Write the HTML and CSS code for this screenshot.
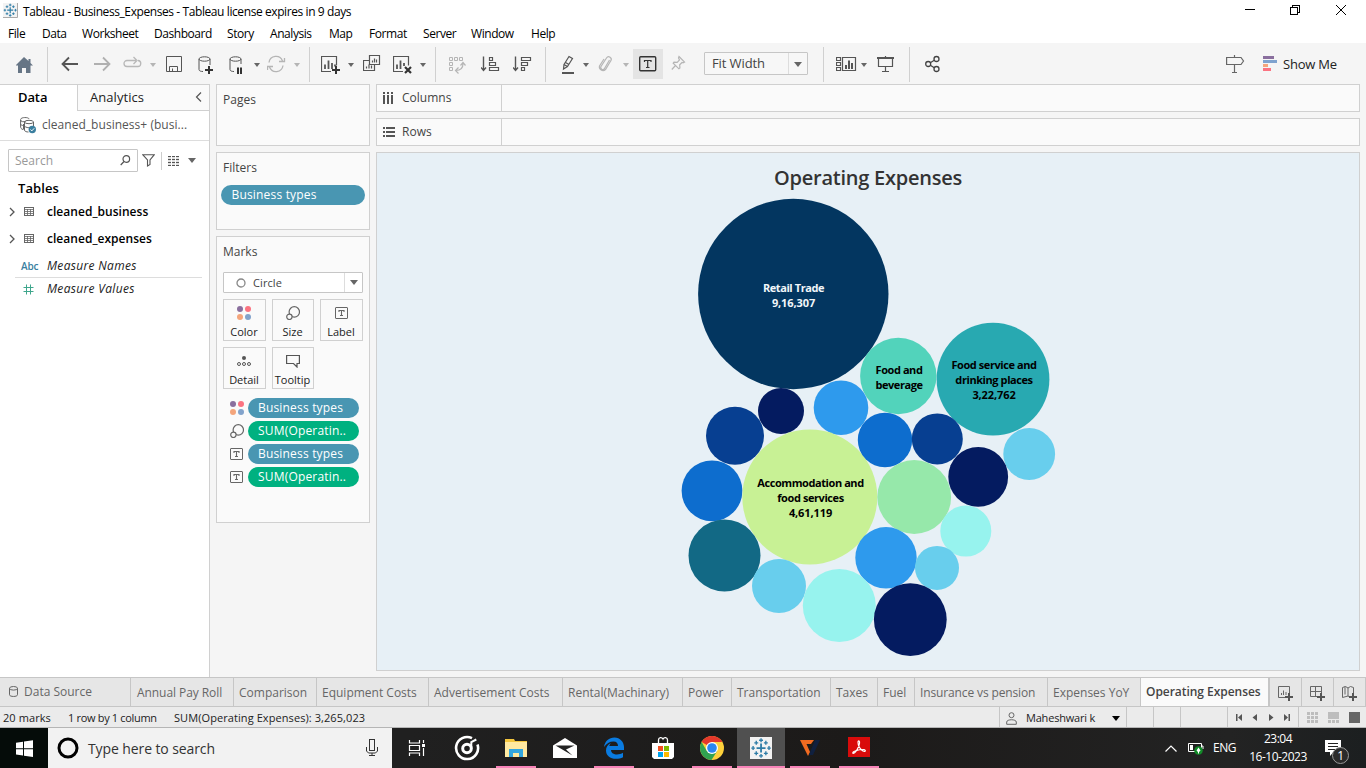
FILE: index.html
```html
<!DOCTYPE html>
<html lang="en">
<head>
<meta charset="utf-8">
<title>Tableau - Business_Expenses</title>
<link rel="stylesheet" href="styles.css">
</head>
<body>
<svg width="0" height="0" class="defs">
  <defs>
    <g id="logo" stroke="#2e7ca6" fill="none"><path d="M6.5 3.5v6M3.5 6.5h6" stroke-width="1.2"/><path d="M6.5 0v2.6M5.2 1.3h2.6M6.5 10.4V13M5.2 11.7h2.6M0 6.5h2.4M1.2 5.2v2.6M10.6 6.5H13M11.8 5.2v2.6M2 3h2.6M3.3 1.7v2.6M8.4 3H11M9.7 1.7v2.6M2 10h2.6M3.3 8.7v2.6M8.4 10H11M9.7 8.7v2.6" stroke-width=".9"/></g>
    <g id="dots"><circle cx="3" cy="3" r="3" fill="#8a6f9e"/><circle cx="11" cy="3" r="3" fill="#fb7381"/><circle cx="3" cy="11" r="3" fill="#f4a57c"/><circle cx="11" cy="11" r="3" fill="#82a3cb"/></g>
    <g id="size" fill="none" stroke="#666" stroke-width="1.2"><circle cx="8.3" cy="5.9" r="5.2"/><circle cx="3.4" cy="10.8" r="2.7" fill="#fafafa"/></g>
    <g id="label"><rect x=".5" y=".5" width="12" height="11" rx=".5" fill="none" stroke="#666"/><path d="M4 5V3.5h5V5M6.500 3.500v5M5 8.500h3" fill="none" stroke="#666" stroke-width="1.1"/></g>
    <g id="table" fill="none" stroke="#666"><rect x=".5" y=".5" width="9" height="8"/><path d="M0 2.500h10M0 4.500h10M0 6.500h10M3.500 2v7M6.500 2v7" stroke-width=".8"/></g>
    <path id="chev" d="M1 1l4 4-4 4" fill="none" stroke="#555" stroke-width="1.3"/>
  </defs>
</svg>
<div class="app">
  <header class="titlebar">
    <svg class="app-logo" width="15" height="15"><rect width="15" height="15" fill="#f3f3f3"/><path d="M14.500 0v14.500H0" fill="none" stroke="#aaa"/><use href="#logo" x=".7" y=".7"/></svg>
    <span class="title">Tableau - Business_Expenses - Tableau license expires in 9 days</span>
    <svg class="winctl" width="104" height="16" fill="none" stroke="#000" shape-rendering="crispEdges"><path d="M0 7.500h10"/><path d="M45.500 5.500h7v7h-7zM47.500 5V3.500h7v7H53"/><path d="M91 3l10 10M101 3l-10 10" shape-rendering="auto"/></svg>
  </header>
  <nav class="menubar">
    <span>File</span><span>Data</span><span>Worksheet</span><span>Dashboard</span><span>Story</span><span>Analysis</span><span>Map</span><span>Format</span><span>Server</span><span>Window</span><span>Help</span>
  </nav>
  <div class="toolbar">
    <svg width="20" height="24"><path d="M8 5L-.5 13.500H2V21h4v-5h4v5h4.500v-7.500H17L14.500 11V7h-2v2z" fill="#667585"/></svg>
    <i class="sep"></i>
    <svg width="20" height="24"><path d="M1.500 12H17M8 5.500L1.500 12 8 18.500" fill="none" stroke="#555" stroke-width="1.8"/></svg>
    <svg width="20" height="24"><path d="M0 12h15.500M9 5.500l6.500 6.500L9 18.500" fill="none" stroke="#b0b0b0" stroke-width="1.8"/></svg>
    <svg width="20" height="24"><path d="M9 8.500H4a3 3 0 0 0 0 6h10.500a3 3 0 0 0 .5-6M8 8.500h5M10.500 5l3.500 3.500-3.500 3.500" fill="none" stroke="#b8b8b8" stroke-width="1.3"/></svg>
    <i class="caret dim"></i>
    <svg width="20" height="24" fill="none" stroke="#555"><path d="M.5 4.500h15v15H.5zM3.500 19.400V14.500H11.500v4.900"/><path d="M6.500 19v-2.500"/></svg>
    <svg width="20" height="24" fill="none" stroke="#555"><ellipse cx="6.500" cy="7" rx="5.500" ry="2.200"/><path d="M1 7v10.500c0 1.500 2 2 4 2M12 7v6"/><path d="M7 18h8M11 14v8" stroke="#333" stroke-width="2"/></svg>
    <svg width="20" height="24" fill="none" stroke="#555"><ellipse cx="6.500" cy="7" rx="5.500" ry="2.200"/><path d="M1 7v10.500c0 1.500 2 2 4 2M12 7v5"/><path d="M9 15.500v6.500M12 15.500v6.500" stroke="#333" stroke-width="2"/></svg>
    <i class="caret"></i>
    <svg width="20" height="24" fill="none" stroke="#b5b5b5" stroke-width="1.300"><path d="M2 10.500a7 7 0 0 1 13.500-1.500M16 13.500a7 7 0 0 1-13.500 1.500"/><path d="M12 9.500h5.500V6M6 14.500H.5V18"/></svg>
    <i class="caret dim"></i>
    <i class="sep"></i>
    <svg width="20" height="24" fill="none" stroke="#555"><path d="M10 19.500H.5v-15h15v9" stroke-width="1.200"/><path d="M4 17v-4.500M7.500 17V8.500M11 17v-6M14 14.500v-2" stroke-width="1.800"/><path d="M11 18h8M15 14v8" stroke="#333" stroke-width="2"/></svg>
    <i class="caret"></i>
    <svg width="20" height="24" fill="none" stroke="#555"><path d="M6.500 3.500h10v9h-10zM6 8.500H.5v10h11V13" stroke-width="1.200"/><path d="M9.500 10.500v-2M11.500 10.500v-4M13.500 10.500v-3M3.500 16.500v-2M6 16.500v-4M8.500 16.500v-3" stroke-width="1.200"/></svg>
    <svg width="20" height="24" fill="none" stroke="#555"><path d="M10 19.500H.5v-15h15v9" stroke-width="1.200"/><path d="M4 17v-4.500M7.500 17V8.500M11 14v-3" stroke-width="1.800"/><path d="M12 15l6 6M18 15l-6 6" stroke="#333" stroke-width="2.200"/></svg>
    <i class="caret"></i>
    <i class="sep"></i>
    <svg width="20" height="24" fill="none" stroke="#b5b5b5"><path d="M1.500 5.500h3v3h-3zM6.500 5.500h3v3h-3zM11.500 5.500h3v3h-3zM1.500 10.500h3v3h-3zM1.500 15.500h3v3h-3z"/><path d="M8 18.500c4 0 7-2 7-7M12.500 13.500l2.500-3 2.500 3M10.500 15.500l-3 3 3 3" stroke-width="1.200"/></svg>
    <svg width="20" height="24" fill="none" stroke="#555"><path d="M2.500 4.500V18M0 15.500l2.500 3 2.500-3" stroke-width="1.400"/><path d="M8.500 5.500h3v3h-3zM8.500 10.500h6v3h-6zM8.500 15.500h9v3h-9z" stroke-width="1.200"/></svg>
    <svg width="20" height="24" fill="none" stroke="#555"><path d="M2.500 4.500V18M0 15.500l2.500 3 2.500-3" stroke-width="1.400"/><path d="M8.500 5.500h9v3h-9zM8.500 10.500h6v3h-6zM8.500 15.500h3v3h-3z" stroke-width="1.200"/></svg>
    <i class="sep"></i>
    <svg width="20" height="24" fill="none" stroke="#555"><path d="M3 12.500l5-8 3.500 2-5 8zM3 12.500L2.500 17l4-2.500M4.500 10.500l3.500 2" stroke-width="1.200"/><path d="M1 21h12" stroke-width="2"/></svg>
    <i class="caret"></i>
    <svg width="20" height="24" fill="none" stroke="#b5b5b5" stroke-width="1.200"><path d="M11.500 8l-5 8.500a2 2 0 0 1-3.500-2L8.500 6a2.500 2.500 0 0 1 4.300 2.800L7.500 17.500A3.600 3.600 0 0 1 1.500 14L6 7"/></svg>
    <i class="caret dim"></i>
    <span class="tbtn"><svg width="30" height="30" fill="none" stroke="#333"><rect x="6.700" y="7.700" width="16" height="14" rx="1" stroke-width="1.400"/><path d="M11.500 13v-1.500h6.500V13M14.700 11.500v7M13 18.500h3.500" stroke-width="1.200"/></svg></span>
    <svg width="20" height="24" fill="none" stroke="#b5b5b5" stroke-width="1.200"><path d="M8 4.500l5.500 5.500-1.500.8-1-.3-2.300 2.300.2 3.200-1 .8-5.700-5.700.8-1 3.200.2L8.500 8 7.500 6zM4.500 13.500L.8 17.500"/></svg>
    <div class="fit"><span>Fit Width</span><i class="arrow"></i></div>
    <i class="sep"></i>
    <svg width="22" height="24" fill="none" stroke="#555"><path d="M.5 5.500h4v3h-4zM.5 10.500h4v3h-4zM.5 15.500h4v3h-4zM6.500 5.500h13v13h-13z" stroke-width="1.200"/><path d="M10 17v-4M13 17V8.500M16 17v-6" stroke-width="2"/></svg>
    <i class="caret"></i>
    <svg width="20" height="24" fill="none" stroke="#555" stroke-width="1.200"><path d="M0 6h17" stroke-width="2"/><path d="M1.500 6.500v8h14v-8M8.500 4v2M8.500 14.500V19M5 19.500h7"/></svg>
    <i class="sep"></i>
    <svg width="20" height="24" fill="none" stroke="#444" stroke-width="1.300"><circle cx="3.200" cy="12" r="2.500"/><circle cx="11.500" cy="7" r="2.500"/><circle cx="11.500" cy="17" r="2.500"/><path d="M5.300 10.700l4-2.400M5.300 13.300l4 2.400"/></svg>
    <svg width="20" height="24" fill="none" stroke="#666" stroke-width="1.200"><path d="M.6 5.500H15l2.500 3.500-2.500 3.500H.6zM8.500 3v2.500M8.500 12.500V20M6 20.500h5"/></svg>
    <svg width="20" height="24" shape-rendering="crispEdges"><path fill="#8a6f9e" d="M0 4h11v3H0z"/><path fill="#7fa3cf" d="M0 8h14v3H0z"/><path fill="#f4a57c" d="M0 12h5v3H0z"/><path fill="#fb7381" d="M0 16h8v3H0z"/></svg>
    <span class="showme">Show Me</span>
  </div>

  <main class="workspace">
    <aside class="datapane">
      <div class="side-tabs"><div class="on">Data</div><div class="off"><span>Analytics</span><svg width="7" height="10"><path d="M6 .5L1.500 5 6 9.500" fill="none" stroke="#555" stroke-width="1.200"/></svg></div></div>
      <div class="source"><svg width="17" height="17" fill="none" stroke="#666"><path d="M3 12.500C1 12 .6 11 .6 9V2.500C.6 0 9 0 9 2M.6 3c0 1.800 3 2 5 1.500M3.500 7v5.500M.6 7c0 1 1.500 1.500 3 1.500"/><ellipse cx="9" cy="5" rx="4.500" ry="1.700"/><path d="M4.500 5v8c0 1.500 2 2 4 2M13.500 5v4M4.500 9c1 1.500 4 2 6 1.500"/><circle cx="12.300" cy="12.500" r="3.700" fill="#3b7f9f" stroke="none"/><path d="M10.500 12.500l1.300 1.400 2.400-2.600" stroke="#fff"/></svg><span>cleaned_business+ (busi...</span></div>
      <div class="searchrow">
        <div class="search"><span>Search</span><svg width="11" height="11" fill="none" stroke="#555" stroke-width="1.200"><circle cx="6.300" cy="4" r="3.300"/><path d="M4 6.500L.7 10"/></svg></div>
        <svg class="funnel" width="13" height="13" fill="none" stroke="#555" stroke-width="1.100"><path d="M.7.7h11.600L8 6v4.500L5.500 12V6z"/></svg>
        <i class="vsep"></i>
        <svg class="list" width="12" height="10"><path d="M0 .5h12M0 3.500h12M0 6.500h12M0 9.500h12" stroke="#555" stroke-dasharray="3 1"/><path d="M0 2h12M0 5h12M0 8h12" stroke="#999" stroke-width=".6" stroke-dasharray="3 1"/></svg>
        <i class="arrow"></i>
      </div>
      <h2>Tables</h2>
      <div class="tbl"><svg width="7" height="10"><use href="#chev"/></svg><svg width="10" height="9"><use href="#table"/></svg><b>cleaned_business</b></div>
      <div class="tbl"><svg width="7" height="10"><use href="#chev"/></svg><svg width="10" height="9"><use href="#table"/></svg><b>cleaned_expenses</b></div>
      <div class="field"><span class="abc">Abc</span><em>Measure Names</em></div>
      <div class="field last"><svg width="11" height="11"><path d="M3.500.5v10M7.500.5v10M.5 3.500h10M.5 7.500h10" stroke="#3fa68c" fill="none"/></svg><em>Measure Values</em></div>
    </aside>

    <section class="cards">
      <div class="card pages"><h3>Pages</h3></div>
      <div class="card filters"><h3>Filters</h3><div class="pill blue">Business types</div></div>
      <div class="card marks">
        <h3>Marks</h3>
        <div class="marktype"><svg width="10" height="10"><circle cx="5" cy="5" r="4" fill="none" stroke="#888" stroke-width="1.300"/></svg><span>Circle</span><i class="arrow"></i></div>
        <div class="btns">
          <div><svg width="14" height="14"><use href="#dots"/></svg><span>Color</span></div>
          <div><svg width="14" height="14"><use href="#size"/></svg><span>Size</span></div>
          <div><svg width="13" height="14"><use href="#label" y="1"/></svg><span>Label</span></div>
          <div><svg width="14" height="14" fill="none" stroke="#555"><circle cx="7" cy="4" r="2" fill="#555" stroke="none"/><circle cx="2" cy="10" r="1.500"/><circle cx="7" cy="10" r="1.500"/><circle cx="12" cy="10" r="1.500"/></svg><span>Detail</span></div>
          <div><svg width="14" height="14" fill="none" stroke="#555" stroke-width="1.200"><path d="M.6 1.500h12.800v8H11v3.500L7.500 9.500H.6z"/></svg><span>Tooltip</span></div>
        </div>
        <div class="enc"><svg width="14" height="14"><use href="#dots"/></svg><div class="pill blue">Business types</div></div>
        <div class="enc"><svg width="14" height="14"><use href="#size"/></svg><div class="pill green">SUM(Operatin..</div></div>
        <div class="enc"><svg width="14" height="12"><use href="#label"/></svg><div class="pill blue">Business types</div></div>
        <div class="enc"><svg width="14" height="12"><use href="#label"/></svg><div class="pill green">SUM(Operatin..</div></div>
      </div>
    </section>

    <section class="sheet">
      <div class="shelf"><div><svg width="11" height="12"><path d="M1 0v2M5 0v2M9 0v2M1 3v9M5 3v9M9 3v9" stroke="#555" stroke-width="2"/></svg><span>Columns</span></div></div>
      <div class="shelf"><div><svg width="12" height="10"><path d="M0 1h2M3 1h9M0 5h2M3 5h9M0 9h2M3 9h9" stroke="#555" stroke-width="2"/></svg><span>Rows</span></div></div>
      <div class="viz">
        <h1>Operating Expenses</h1>
        <svg class="bubbles" width="982" height="480" viewBox="377 191 982 480">
          <circle cx="793.300" cy="294" r="95.200" fill="#033660"/>
          <circle cx="898.300" cy="376" r="38.200" fill="#52d3bb"/>
          <circle cx="993" cy="379.200" r="56.400" fill="#28a9b1"/>
          <circle cx="781" cy="411" r="23" fill="#041b60"/>
          <circle cx="841" cy="407.700" r="27.300" fill="#2e9aed"/>
          <circle cx="735" cy="435.800" r="29" fill="#073f91"/>
          <circle cx="712" cy="490.800" r="30.400" fill="#0d6dce"/>
          <circle cx="809.800" cy="497" r="67.500" fill="#c8f195"/>
          <circle cx="885" cy="440" r="27.200" fill="#0d6dce"/>
          <circle cx="937.300" cy="438.900" r="25.500" fill="#073f91"/>
          <circle cx="1029.200" cy="454" r="25.900" fill="#68ceed"/>
          <circle cx="978.200" cy="476.800" r="29.900" fill="#041b60"/>
          <circle cx="914.200" cy="497" r="36.900" fill="#96e8aa"/>
          <circle cx="965.800" cy="531.100" r="25.500" fill="#97f3ee"/>
          <circle cx="886" cy="557.800" r="30.700" fill="#2e9aed"/>
          <circle cx="937" cy="567.900" r="22" fill="#68ceed"/>
          <circle cx="724.500" cy="555.600" r="36" fill="#126985"/>
          <circle cx="779" cy="586" r="27" fill="#68ceed"/>
          <circle cx="839.300" cy="605.500" r="36.500" fill="#97f3ee"/>
          <circle cx="910.300" cy="619.600" r="36.400" fill="#041b60"/>
          <g class="lbl">
            <g fill="#f2f6fa"><text x="793.500" y="292">Retail Trade</text><text x="793.500" y="307" class="num">9,16,307</text></g>
            <text x="899" y="374">Food and</text><text x="899" y="389">beverage</text>
            <text x="994" y="369">Food service and</text><text x="994" y="384">drinking places</text><text x="994" y="399" class="num">3,22,762</text>
            <text x="810.500" y="487">Accommodation and</text><text x="810.500" y="502">food services</text><text x="810.500" y="517" class="num">4,61,119</text>
          </g>
        </svg>
      </div>
    </section>
  </main>

  <nav class="sheettabs">
    <div class="ds"><svg width="9" height="11" fill="none" stroke="#666"><ellipse cx="4.500" cy="2.300" rx="4" ry="1.800"/><path d="M.5 2.300v6.500c0 2.200 8 2.200 8 0V2.300"/></svg>Data Source</div>
    <div>Annual Pay Roll</div><div>Comparison</div><div>Equipment Costs</div><div>Advertisement Costs</div><div>Rental(Machinary)</div><div>Power</div><div>Transportation</div><div>Taxes</div><div>Fuel</div><div>Insurance vs pension</div><div>Expenses YoY</div><div class="active">Operating Expenses</div>
    <div class="new"><svg width="16" height="15" fill="none" stroke="#666"><path d="M7 11.500H.5V.5h11V7"/><path d="M3.500 9V7M5.500 9V4.500M8 9V6"/><path d="M7 11h8M11 7v8" stroke="#555" stroke-width="2"/></svg></div>
    <div class="new"><svg width="16" height="15" fill="none" stroke="#666"><path d="M7 10.500H.5V.5h11V7M5.500.5v10M.5 5.500h11"/><path d="M7 11h8M11 7v8" stroke="#555" stroke-width="2"/></svg></div>
    <div class="new"><svg width="16" height="15" fill="none" stroke="#666"><path d="M7 10.500l-1-.5-5.500 1.500V1.500L3.500.5 6 2l2.500-1.500 3 1V7M6 2v8M3 .5v8"/><path d="M7 11h8M11 7v8" stroke="#555" stroke-width="2"/></svg></div>
  </nav>
  <div class="status">
    <div class="info"><span>20 marks</span><span>1 row by 1 column</span><span>SUM(Operating Expenses): 3,265,023</span></div>
    <div class="user"><svg width="11" height="13" fill="none" stroke="#666"><circle cx="5.500" cy="3.200" r="2.500"/><path d="M.7 12.300V10c0-3 9.600-3 9.600 0v2.300z"/></svg><span>Maheshwari k</span><i class="arrow"></i></div>
    <div></div><div></div><div></div>
    <div class="nav"><svg width="60" height="9" fill="#555"><path d="M1 1h1.500v7H1zM7 1v7L3 4.500zM22 1v7l-4.500-3.500zM34 1v7l4.500-3.500zM49 1v7l4-3.500zM53.500 1H55v7h-1.500z"/></svg></div>
    <div class="views"><svg width="54" height="11"><path fill="#bdbdbd" d="M0 0h3v3H0zM4 0h3v3H4zM8 0h3v3H8zM0 4h3v3H0zM4 4h3v3H4zM8 4h3v3H8zM0 8h3v3H0zM4 8h3v3H4zM8 8h3v3H8zM21 0h11v7H21zM21 8h3v3h-3zM25 8h3v3h-3zM29 8h3v3h-3z"/><path fill="#666" d="M42 0h11v11H42z"/></svg></div>
  </div>

  <footer class="taskbar">
    <div class="start"><svg width="17" height="17" fill="#fff"><path d="M0 2.800l7-1v6.400H0zM8 1.600L17 .3v7.900H8zM0 9.200h7v6.300l-7-1zM8 9.200h9V17l-9-1.300z"/></svg></div>
    <div class="cortana"><svg width="22" height="22"><circle cx="11" cy="11" r="9" fill="none" stroke="#000" stroke-width="3"/></svg><span>Type here to search</span><svg width="12" height="18" fill="none" stroke="#333"><rect x="3.500" y=".5" width="5" height="11"/><path d="M.5 8v4l2 2h7l2-2V8M6 14v3M3 16.500h6"/></svg></div>
    <div class="app-ic"><svg width="24" height="24" fill="none" stroke="#fff" stroke-width="1.200"><path d="M3.500 4v3h10V4M3.500 20v-3h10v3M3.500 9.500h10v5h-10z"/><path d="M17.500 4v3M17.500 12v8"/><path d="M16 8h3v3h-3z" fill="#fff" stroke="none"/></svg></div>
    <div class="app-ic"><svg width="26" height="26" fill="none" stroke="#fff"><path d="M18 3.200A11 11 0 1 0 23.500 9.500" stroke-width="2.600"/><circle cx="13" cy="13.500" r="4.300" stroke-width="3"/><path d="M17.300 13.500V7l5-2.500" stroke-width="2"/></svg></div>
    <div class="app-ic run"><svg width="24" height="24"><path fill="#f4c63e" d="M1 3h9l1 2h12v4H1z"/><path fill="#ffe9a1" d="M1 6h22v15H1z"/><path fill="#32a6df" d="M5 13h14v8h-4v-4H9v4H5z"/></svg></div>
    <div class="app-ic"><svg width="24" height="24"><path fill="#fff" d="M0 9.500L12 2l12 7.500V22H0z"/><path fill="#222" d="M2.500 9.500h19L13 13.500l6.500 6z"/></svg></div>
    <div class="app-ic run"><svg width="24" height="24"><path fill="#0a7be0" d="M2 11C3 5 7 1.500 12.500 1.500 18 1.500 22 6 22 11v3H9c0 3 3 4.500 6 4.500 2 0 4.500-.6 6-1.700v4.400c-2 1.100-4.500 1.600-7 1.600-6 0-10-3.300-10-8.300 0-3.500 2-6 4.800-7.500-.8 1-1.300 2-1.500 3H16c0-2.700-1.500-4.500-4.500-4.500C7.500 5.500 4.500 7.500 2 11z"/></svg></div>
    <div class="app-ic"><svg width="24" height="24"><path d="M7.500 8V4c0-3 3.500-3 4.500-1 1-2 4.500-2 4.500 1v4" fill="none" stroke="#fff" stroke-width="1.300"/><path fill="#fff" d="M1 7h22v14l-2 2H3l-2-2z"/><path fill="#f25022" d="M7 10h5v5H7z"/><path fill="#7fba00" d="M13 10h5v5h-5z"/><path fill="#00a4ef" d="M7 16h5v5H7z"/><path fill="#ffb900" d="M13 16h5v5h-5z"/></svg></div>
    <div class="app-ic run"><svg width="24" height="24"><circle cx="12" cy="12" r="12" fill="#fdd03b"/><path fill="#e5382b" d="M12 12L1.600 6A12 12 0 0 1 22.400 6H12z"/><path fill="#31a350" d="M1.600 6A12 12 0 0 0 11.500 24L17.200 15 12 12 6.800 15z"/><circle cx="12" cy="12" r="6" fill="#fff"/><circle cx="12" cy="12" r="4.800" fill="#2b86f0"/></svg></div>
    <div class="app-ic run current"><svg width="24" height="24"><rect x="1" y="1" width="22" height="22" fill="#f2f2f2"/><use href="#logo" transform="translate(2.300 2.300) scale(1.500)"/></svg></div>
    <div class="app-ic run"><svg width="24" height="24"><path fill="#f26b21" d="M2 4h14l-3 4H8.500l3.500 8-2 4z"/><path fill="#10203f" d="M17 4h5l-7 15h-4z"/></svg></div>
    <div class="app-ic run"><svg width="24" height="24"><rect x="1" y="1" width="22" height="20" fill="#d90b0b"/><path d="M6 17.500c-1.500-2 5-4 11-4 2.500 1 1 2.500-1 1.500-3-2-5-5-5-9 .3-2 2-1 1.500 1.500C12 11 8.500 17.500 6 17.500z" fill="none" stroke="#fff" stroke-width="1.200"/></svg></div>
    <div class="tray">
      <svg width="14" height="9"><path d="M1.500 7.500L7 2l5.500 5.500" fill="none" stroke="#fff" stroke-width="1.200"/></svg>
      <svg width="16" height="13"><path d="M.5 1.500h13v8H.5zM14 4h1v3" fill="none" stroke="#fff"/><path d="M2 3h3v5H2z" fill="#fff"/><circle cx="10.500" cy="8.500" r="4.300" fill="#128a28"/><path d="M10.500 5.500l2 3-1.500 1.500v1.500h-1V10L8.500 8.500z" fill="#fff"/></svg>
      <span>ENG</span>
      <div class="clock"><span>23:04</span><span>16-10-2023</span></div>
      <div class="notif"><svg width="16" height="17"><path fill="#fff" d="M0 0h16v12H8.500L5 16v-4H0z"/><path d="M3 3.500h10M3 6.500h10M3 9.500h7" stroke="#222"/></svg><span class="badge">1</span></div>
    </div>
  </footer>
</div>
</body>
</html>
```
FILE: styles.css
```css
* { box-sizing: border-box; }
body { margin: 0; width: 1366px; height: 768px; overflow: hidden; background: #f5f5f5; font: 12px/16px "Open Sans", "Noto Sans", sans-serif; color: #222; }
h1, h2, h3 { margin: 0; }
svg { display: block; flex: none; }
svg.defs { position: absolute; }
.app { display: grid; grid-template-rows: 24px 19px 41px 593px 30px 21px 40px; height: 768px; }

.titlebar { display: flex; align-items: center; background: #fff; color: #000; padding-left: 3px; }
.app-logo { margin-top: -3px; }
.title { margin-left: 5px; letter-spacing: -.41px; }
.winctl { margin-left: auto; margin-right: 17px; margin-top: -5px; }
.menubar { display: grid; grid-template-columns: 34px 40px 72px 73px 43px 59px 40px 54px 48px 60px 60px; padding-left: 8px; background: #fff; color: #000; letter-spacing: -.44px; line-height: 20px; }

.toolbar { display: grid; grid-template-columns: 31px 14px 33px 29px 27px 16px 32px 31px 25px 13px 27px 15px 12px 27px 15px 30px 27px 15px 13px 33px 32px 32px 16px 22px 15px 25px 10px 38px 33px 119px 13px 25px 16px 32px 16px 301px 37px 20px 60px; align-items: center; justify-items: start; padding: 1px 0 0 16px; }
.sep { width: 1px; height: 35px; background: #d0d0d0; }
.caret { border: 3px solid transparent; border-top: 4px solid #666; border-bottom: 0; margin-top: 1px; }
.caret.dim { border-top-color: #b5b5b5; }
.arrow { width: 8px; border: 4px solid transparent; border-top: 5px solid #666; border-bottom: 0; }
.tbtn { background: #e4e4e4; }
.fit { display: flex; align-items: center; width: 104px; height: 23px; border: 1px solid #c6c6c6; background: #f7f7f7; font-size: 13px; letter-spacing: -.1px; color: #444; padding-left: 7px; border-radius: 1px; }
.toolbar .fit, .toolbar .showme { margin-bottom: 1px; }
.fit span { width: 86px; border-right: 1px solid #ddd; line-height: 21px; }
.fit .arrow { margin: 1px 5px 0 5px; }
.showme { font-size: 13px; letter-spacing: -.2px; }

.workspace { display: grid; grid-template-columns: 210px 160px 990px; }
.datapane { background: #fff; border: solid #d0d0d0; border-width: 1px 1px 0 0; }
.side-tabs { display: flex; height: 26px; font-size: 13px; line-height: 25px; color: #000; }
.side-tabs .on { width: 77px; padding-left: 18px; font-weight: 600; letter-spacing: -.1px; }
.side-tabs .off { flex: 1; display: flex; align-items: center; justify-content: space-between; background: #fafafa; border: solid #d0d0d0; border-width: 0 0 1px 1px; padding: 0 7px 1px 12px; color: #222; letter-spacing: .05px; }
.source { display: flex; align-items: center; height: 30px; border-bottom: 1px solid #ddd; padding: 0 0 1px 20px; gap: 5px; color: #555; letter-spacing: .03px; }
.searchrow { display: flex; align-items: center; margin-top: 8px; padding-left: 8px; height: 23px; }
.search { display: flex; align-items: center; justify-content: space-between; width: 130px; height: 23px; border: 1px solid #c6c6c6; border-radius: 1px; padding: 0 6px; color: #999; }
.funnel { margin-left: 4px; }
.vsep { width: 1px; height: 18px; background: #ccc; margin-left: 6px; }
.list { margin-left: 6px; }
.searchrow .arrow { margin-left: 8px; }
.datapane h2 { font-size: 13px; font-weight: 600; line-height: 18px; color: #000; margin: 7px 0 0 18px; letter-spacing: .1px; }
.tbl { display: grid; grid-template-columns: 15px 23px 1fr; align-items: center; height: 27px; padding-left: 9px; color: #000; }
.datapane h2 + .tbl { margin-top: 1px; }
.tbl b { font-weight: 600; letter-spacing: .03px; }
.field { display: grid; grid-template-columns: 32px 1fr; align-items: center; height: 26px; margin-left: 15px; margin-right: 7px; padding-top: 3px; border-bottom: 1px solid #ddd; letter-spacing: .32px; }
.field .abc { color: #3b7f9f; font-size: 10px; font-weight: 600; padding-left: 6px; letter-spacing: -.2px; }
.field svg { margin-left: 8px; }
.field.last { border: 0; height: 22px; padding-top: 0; }

.cards { padding: 0 0 0 6px; }
.card { width: 154px; background: #fafafa; border: 1px solid #d0d0d0; }
.card h3 { font-size: 12px; font-weight: 400; line-height: 16px; color: #444; margin: 7px 0 0 6px; }
.pages { height: 62px; }
.filters { height: 78px; margin-top: 6px; }
.marks { height: 287px; margin-top: 6px; }
.pill { height: 20px; border-radius: 10px; color: #fff; line-height: 19px; padding-left: 10px; letter-spacing: .18px; }
.pill.blue { background: #4996b2; }
.pill.green { background: #00b180; }
.filters .pill { width: 144px; margin: 9px 0 0 4px; padding-left: 10.500px; }
.marktype { display: grid; grid-template-columns: 17px 92px 1fr; align-items: center; width: 140px; height: 21px; margin: 12px 0 0 6px; border: 1px solid #c6c6c6; border-radius: 1px; padding-left: 12px; font-size: 11px; letter-spacing: .1px; color: #444; background: #fff; }
.marktype span { border-right: 1px solid #ddd; line-height: 19px; }
.marktype .arrow { margin-left: 5px; }
.btns { display: grid; grid-template-columns: 43px 42px 43px; column-gap: 6px; row-gap: 6px; margin: 6px 0 0 6px; }
.btns div { height: 42px; border: 1px solid #d0d0d0; display: flex; flex-direction: column; align-items: center; padding-top: 6px; gap: 4px; font-size: 11px; line-height: 15px; padding-right: 1px; }
.enc { display: grid; grid-template-columns: 18px 111px; align-items: center; height: 20px; margin: 3px 0 0 13px; }
.btns + .enc { margin-top: 9px; }

.sheet { padding-left: 6px; }
.shelf { height: 28px; margin-bottom: 6px; border: 1px solid #d0d0d0; background: #fafafa; }
.shelf div { display: grid; grid-template-columns: 19px 1fr; align-items: center; width: 125px; height: 26px; padding-left: 6px; border-right: 1px solid #d0d0d0; color: #444; }
.shelf svg { margin-top: -1px; }
.viz { height: 519px; border: 1px solid #d0d0d0; background: #e7f0f6; }
.viz h1 { height: 38px; font-size: 20px; line-height: 49px; font-weight: 600; text-align: center; color: #333; letter-spacing: -.24px; }
.lbl text { font: 700 11px "Open Sans", sans-serif; letter-spacing: -.42px; text-anchor: middle; }
.lbl .num { letter-spacing: -.1px; }

.sheettabs { display: grid; grid-template-columns: 131px 103px 83px 112px 134px 120px 49px 99px 47px 37px 133px 93px 128px 33px 32px 32px; border: solid #c6c6c6; border-width: 1px 0; background: #e6e6e6; color: #666; line-height: 30px; }
.sheettabs div { height: 28px; border-right: 1px solid #c6c6c6; padding-left: 5px; white-space: nowrap; }
.sheettabs div:nth-child(2) { padding-left: 6px; letter-spacing: -.07px; }
.sheettabs div:nth-child(11) { letter-spacing: -.13px; }
.sheettabs .ds { display: flex; align-items: center; gap: 6px; padding-left: 9px; }
.ds svg { margin-top: -2px; }
.sheettabs .active { background: #fafafa; color: #444; font-weight: 600; line-height: 28px; letter-spacing: -.04px; }
.sheettabs .new { padding: 2px 0 0 1px; display: grid; place-items: center; }
.sheettabs .new:nth-child(14) { border-left: 1px solid #c6c6c6; }
.status { display: grid; grid-template-columns: 999px 127px 27px 27px 47px 71px 68px; background: #ebebeb; border-bottom: 1px solid #b5b5b5; font-size: 11px; line-height: 22px; }
.status > div { height: 20px; }
.status > div + div { border-left: 1px solid #c6c6c6; }
.status .info { display: grid; grid-template-columns: 65px 106px auto; padding-left: 3px; letter-spacing: .08px; }
.status .info span:nth-child(2) { letter-spacing: -.32px; }
.status .user { display: grid; grid-template-columns: 20px 86px auto; align-items: center; padding-left: 6px; letter-spacing: -.2px; }
.user .arrow { border-top-color: #000; }
.nav { padding: 6px 0 0 7px; }
.views { padding: 5px 0 0 8px; }

.taskbar { display: grid; grid-template-columns: 48px 345px repeat(10, 49px) 1fr; background: linear-gradient(90deg, #202020 30%, #1c1a19 62%, #232323 90%, #1c1f20); color: #fff; }
.start { display: grid; place-items: center; background: #050c09; }
.cortana { display: grid; grid-template-columns: 31px 278px 1fr; align-items: center; width: 344px; background: #f2f2f2; color: #333; padding-left: 9px; font-size: 14px; letter-spacing: -.1px; }
.cortana span { padding-top: 2px; }
.app-ic { display: grid; place-items: center; height: 40px; }
.run { background: linear-gradient(#f783b8, #f783b8) 5px 38px / 40px 2px no-repeat; }
.current { background: linear-gradient(#f783b8, #f783b8) 1px 38px / 48px 2px no-repeat, linear-gradient(#505050, #505050) 1px 0 / 48px 40px no-repeat; }
.tray { display: grid; grid-template-columns: 24px 25px 35px 60px 1fr; align-items: center; padding-left: 281px; letter-spacing: -.5px; }
.clock { display: flex; flex-direction: column; align-items: center; line-height: 18px; }
.notif { position: relative; margin-left: 17px; margin-top: 7px; width: 24px; height: 24px; }
.badge { position: absolute; left: 7px; top: 7px; width: 17px; height: 17px; border: 1px solid #999; border-radius: 50%; background: #2b2b2b; font-size: 12px; line-height: 15px; text-align: center; }
```
